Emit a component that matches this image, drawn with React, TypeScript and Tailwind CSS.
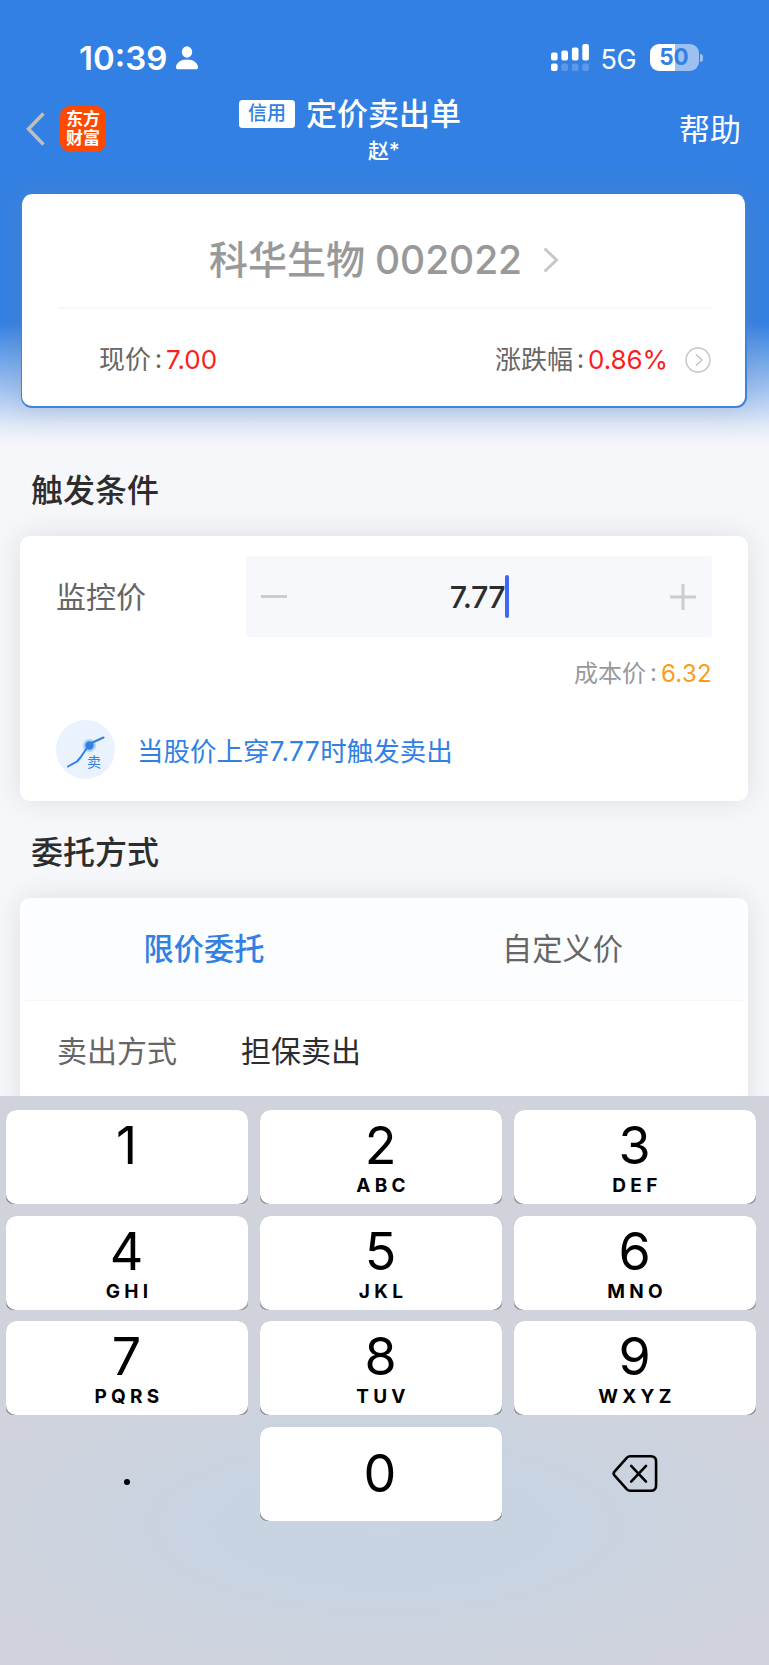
import type { ReactNode } from "react";

const KEYS: { digit: string; letters: string }[] = [
  { digit: "1", letters: "" },
  { digit: "2", letters: "ABC" },
  { digit: "3", letters: "DEF" },
  { digit: "4", letters: "GHI" },
  { digit: "5", letters: "JKL" },
  { digit: "6", letters: "MNO" },
  { digit: "7", letters: "PQRS" },
  { digit: "8", letters: "TUV" },
  { digit: "9", letters: "WXYZ" },
];

function StatusBar() {
  return (
    <div className="flex h-[38px] items-center pl-[79px] pr-[66px] text-white">
      <span className="w-[91px] whitespace-nowrap text-[33px] font-semibold">10:39</span>
      <svg className="ml-[6px] h-[24px] w-[22px]" viewBox="0 0 22 24" fill="currentColor">
        <ellipse cx="11" cy="6" rx="5.2" ry="5.8" />
        <path d="M0 21.5C0 17 4.8 13.6 11 13.6S22 17 22 21.5c0 1.2-.8 1.8-2 1.8H2c-1.200 0-2-.6-2-1.800Z" />
      </svg>
      <svg className="mb-[1px] ml-auto h-[27px] w-[38px]" viewBox="0 0 38 27" fill="currentColor">
        <rect x="0" y="8.500" width="6.600" height="8" rx="2" />
        <rect x="10.400" y="6.500" width="6.600" height="10" rx="2" />
        <rect x="20.900" y="3.500" width="6.600" height="13" rx="2" />
        <rect x="31.300" y="0" width="6.600" height="16.500" rx="2" />
        <rect x="0" y="19.500" width="6.600" height="7.500" rx="2" />
        <g opacity="0.2">
          <rect x="10.400" y="19.500" width="6.600" height="7.500" rx="2" />
          <rect x="20.900" y="19.500" width="6.600" height="7.500" rx="2" />
          <rect x="31.300" y="19.500" width="6.600" height="7.500" rx="2" />
        </g>
      </svg>
      <span className="ml-[12px] w-[36px] pt-[2px] text-[27px] tracking-[-0.500px]">5G</span>
      <div className="mb-[1px] ml-[13px] flex h-[27px] w-[49px] items-center justify-center overflow-hidden rounded-[9px] bg-[linear-gradient(90deg,#fff_0_51%,#9cc0f1_51%_100%)] text-[22.500px] font-bold text-[#3280e3]">
        50
      </div>
      <div className="ml-[1.500px] h-[8px] w-[3px] rounded-r-full bg-[#9cc0f1]" />
    </div>
  );
}

function NavBar() {
  return (
    <div className="flex h-[103px] text-white">
      <div className="flex h-[76px] w-[239px] items-center pl-[26px]">
        <svg className="h-[34px] w-[19px]" viewBox="0 0 19 34" fill="none" stroke="#bcbec2" strokeWidth="3.500">
          <path d="M17.500 1.500 2.500 17l15 15.500" />
        </svg>
        <div className="ml-[15px] flex h-[46px] w-[46px] flex-col items-center justify-center gap-[2.500px] rounded-[10px] bg-[#ff4800] text-[17px] font-bold">
          <span>东方</span>
          <span>财富</span>
        </div>
      </div>
      <div className="flex w-[223px] flex-col pt-[7px]">
        <div className="flex h-[32px] w-full items-center">
          <div className="mb-[1px] flex h-[28px] w-[56px] items-center justify-center rounded-[3.500px] bg-white text-[19px] font-medium text-[#3280e3]">
            信用
          </div>
          <span className="mb-[1px] ml-[11px] whitespace-nowrap text-[31px] font-medium">定价卖出单</span>
        </div>
        <span className="mt-[10px] ml-[129px] text-[21px] font-medium tracking-[-0.300px]">赵*</span>
      </div>
      <div className="ml-auto flex h-[76px] items-center pr-[28px] text-[31px]">帮助</div>
    </div>
  );
}

function Label({ children }: { children: ReactNode }) {
  return (
    <>
      <span>{children}</span>
      <span className="w-[15px] pb-[2px] text-center">:</span>
    </>
  );
}

function QuoteCard() {
  return (
    <section className="mr-[22px] ml-[21px] h-[214px] rounded-[11px] border-r-2 border-b-2 border-l border-[#3f83df] bg-white shadow-[0_0_28px_rgba(120,130,155,0.3)]">
      <div className="mr-[34px] ml-[36px] flex h-[115px] items-center border-b-2 border-[#f7f7f9] pt-[18px] pl-[151px] text-[39px] font-medium text-[#999]">
        <span className="w-[166px]">科华生物</span>
        <span className="w-[148px] whitespace-nowrap tracking-[-0.100px]">002022</span>
        <svg className="ml-[20px] h-[26px] w-[15px]" viewBox="0 0 15 26" fill="none" stroke="#c8c8c8" strokeWidth="3">
          <path d="m1.500 1.500 12 11.500-12 11.500" />
        </svg>
      </div>
      <div className="mr-[34px] ml-[77px] flex h-[101px] items-center text-[26px] text-[#666]">
        <Label>现价</Label>
        <span className="text-[#fb1d20]">7.00</span>
        <div className="ml-auto flex items-center">
          <Label>涨跌幅</Label>
          <span className="w-[80px] whitespace-nowrap tracking-[-0.100px] text-[#fb1d20]">0.86%</span>
          <svg className="ml-[17px] h-[26px] w-[26px]" viewBox="0 0 26 26" fill="none" stroke="#c4c4c4" strokeWidth="1.400">
            <circle cx="13" cy="13" r="12" />
            <path d="m11 7.500 6 5.500-6 5.500" />
          </svg>
        </div>
      </div>
    </section>
  );
}

function TriggerCard() {
  return (
    <section className="mr-[21px] ml-[20px] h-[265px] rounded-[10px] bg-white pt-[20px] pr-[36px] pl-[36px] shadow-[0_0_30px_rgba(0,0,0,0.1)]">
      <div className="flex h-[81px] items-center">
        <span className="w-[190px] shrink-0 text-[30px] text-[#666]">监控价</span>
        <div className="flex h-[81px] w-[466px] shrink-0 items-center justify-between rounded-[4px] bg-[#f6f8fb] pr-[16px] pl-[15px]">
          <div className="h-[3px] w-[26px] bg-[#ccc]" />
          <div className="flex items-center pl-[2px]">
            <span className="pt-[1px] text-[30.500px] font-medium tracking-[-0.600px] text-[#2d2d2d]">7.77</span>
            <span className="h-[43px] w-[4px] rounded-full bg-[#3f66f5]" />
          </div>
          <svg className="h-[26px] w-[26px]" viewBox="0 0 26 26" stroke="#ccc" strokeWidth="3">
            <path d="M0 13h26M13 0v26" />
          </svg>
        </div>
      </div>
      <div className="flex h-[73px] items-center justify-end text-[24px] text-[#999]">
        <Label>成本价</Label>
        <span className="tracking-[0.300px] text-[#fa9d1c]">6.32</span>
      </div>
      <div className="mt-[10px] flex h-[59px] items-center">
        <svg className="h-[59px] w-[59px] shrink-0" viewBox="0 0 59 59">
          <circle cx="29.500" cy="29.500" r="29.500" fill="#e9f2fd" />
          <path d="m12 46.500 9-5 3.500-4 8-12 4-3 11-5" fill="none" stroke="#3280e3" strokeWidth="2" strokeLinecap="round" strokeLinejoin="round" />
          <circle cx="33.500" cy="25.500" r="6.500" fill="#3280e3" opacity="0.300" />
          <circle cx="33.500" cy="25.500" r="4.200" fill="#3280e3" />
          <text x="31" y="47" fontSize="14" fill="#3280e3">卖</text>
        </svg>
        <span className="ml-[22px] pt-[3px] text-[26.500px] text-[#3280e3]">
          当股价上穿<span className="tracking-[0.300px]">7.77</span>时触发卖出
        </span>
      </div>
    </section>
  );
}

function OrderCard() {
  return (
    <section className="mr-[21px] ml-[20px] h-[220px] rounded-t-[10px] bg-white px-[5px] shadow-[0_0_30px_rgba(0,0,0,0.1)]">
      <div className="grid h-[103px] grid-cols-2 items-center rounded-t-[8px] border-b border-[#f4f5f7] bg-[#fcfdff] text-center text-[30.200px]">
        <span className="pr-[1px] font-medium text-[#3280e3]">限价委托</span>
        <span className="pr-[2px] text-[#666]">自定义价</span>
      </div>
      <div className="flex h-[99px] items-center pl-[32px] text-[30px]">
        <span className="w-[184px] text-[#666]">卖出方式</span>
        <span className="text-[#2d2d2d]">担保卖出</span>
      </div>
    </section>
  );
}

function Key({ digit, letters }: { digit: string; letters: string }) {
  return (
    <div className="h-[94px] rounded-t-[10px] rounded-b-[7px] bg-[#86888c]">
      <div className="flex h-[94px] flex-col items-center rounded-[10px] bg-white pt-[10px] text-black">
        <span className="pr-[1px] text-[52px]">{digit}</span>
        <span className="mt-[4px] pl-[4px] text-[19px] font-bold tracking-[4.300px]">{letters}</span>
      </div>
    </div>
  );
}

function Keyboard() {
  return (
    <div className="h-[569px] shrink-0 bg-[#d0d3dc] bg-[radial-gradient(ellipse_430px_160px_at_50%_430px,#c8d3e3_0%,#c9d3e1_50%,rgba(208,211,220,0)_100%)] pt-[14px] pl-[6px]">
      <div className="grid grid-cols-[242px_242px_242px] gap-x-[12px] gap-y-[11.500px]">
        {KEYS.map((key) => (
          <Key key={key.digit} digit={key.digit} letters={key.letters} />
        ))}
        <div className="flex items-center justify-center pt-[17px]">
          <span className="h-[6px] w-[6px] rounded-full bg-black" />
        </div>
        <div className="h-[94px] rounded-t-[10px] rounded-b-[7px] bg-[#86888c]">
          <div className="flex h-[94px] items-center justify-center rounded-[10px] bg-white pr-[2px] text-[52px] text-black">0</div>
        </div>
        <div className="flex items-center justify-center">
          <svg className="h-[39px] w-[46px]" viewBox="0 0 48 40" fill="none" stroke="#000" strokeWidth="2.700" strokeLinecap="round" strokeLinejoin="round">
            <path d="M19 2h21.500q5.500 0 5.500 5.500v25q0 5.500-5.500 5.500H19q-2 0-3.400-1.400L2.800 22.300q-2.200-2.300 0-4.600L15.600 3.400Q17 2 19 2Z" />
            <path d="m20 12 15.500 16.500M35.500 12 20 28.500" />
          </svg>
        </div>
      </div>
    </div>
  );
}

export default function App() {
  return (
    <div className="flex h-[1665px] w-[769px] flex-col overflow-hidden bg-[#f6f7fa] bg-[linear-gradient(180deg,#3280e3_0px,#3280e3_322px,#b4cff4_400px,#dfe8f6_424px,#f6f7fa_445px)] pt-[39px] font-['Inter','Noto_Sans_CJK_SC',sans-serif] leading-none">
      <StatusBar />
      <div className="mt-[14px]">
        <NavBar />
      </div>
      <QuoteCard />
      <h2 className="mt-[66px] ml-[31px] h-[34px] pt-[1px] text-[32px] font-medium text-[#2d2d2d]">触发条件</h2>
      <div className="mt-[28px]">
        <TriggerCard />
      </div>
      <h2 className="mt-[34px] ml-[31px] h-[34px] pt-[2px] text-[32px] font-medium text-[#2d2d2d]">委托方式</h2>
      <div className="mt-[29px] h-[198px]">
        <OrderCard />
      </div>
      <div className="relative">
        <Keyboard />
      </div>
    </div>
  );
}
